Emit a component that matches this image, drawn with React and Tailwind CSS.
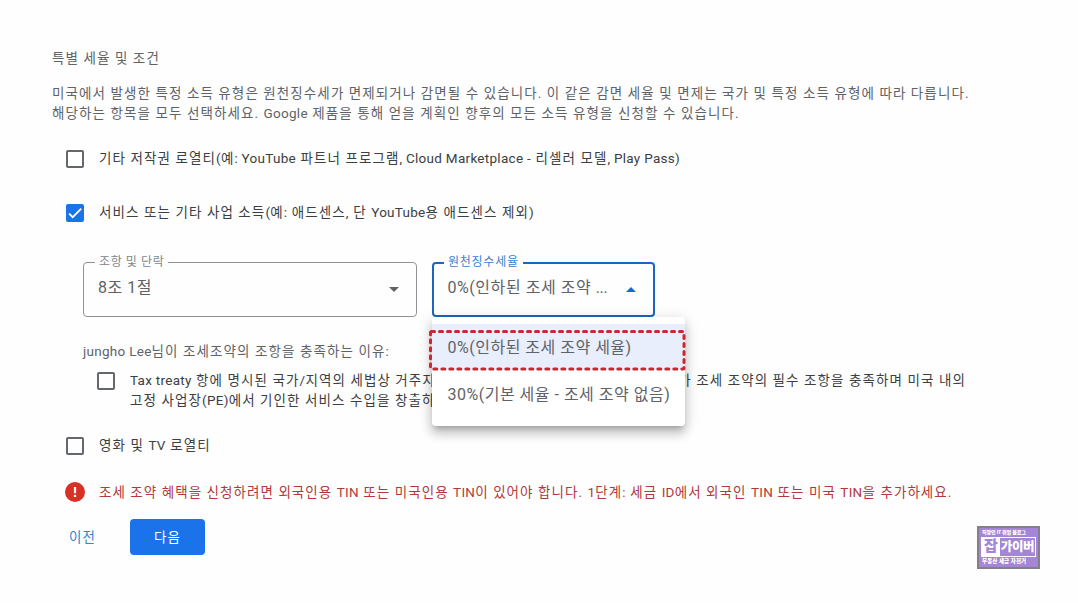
import clsx from "clsx";

// Latin runs are set tighter than the Korean text around them
function Mixed({ children }) {
  return children.split(/([A-Za-z0-9(),:/-]+(?: [A-Za-z0-9(),:/-]+)*)/).map((part, i) =>
    i % 2 ? (
      <span key={i} className="tracking-[0.28px]">{part}</span>
    ) : (
      part
    )
  );
}

function Checkbox({ checked }) {
  return (
    <span
      className={clsx(
        "flex h-[18px] w-[18px] shrink-0 items-center justify-center rounded-[2px]",
        checked ? "bg-[#1a73e8]" : "border-2 border-[#64676b]"
      )}
    >
      {checked && (
        <svg viewBox="0 0 24 24" className="h-[18px] w-[18px]" fill="none" stroke="white" strokeWidth="2.4">
          <path d="M4.1 12.7 9 17.6 20.3 6.3" />
        </svg>
      )}
    </span>
  );
}

function Option({ checked, className, children }) {
  return (
    <label className={clsx("flex h-5 items-center gap-[15px] pl-[14px] text-[#3c4043]", className)}>
      <Checkbox checked={checked} />
      <span className="pb-0.5"><Mixed>{children}</Mixed></span>
    </label>
  );
}

function Menu() {
  return (
    <ul className="absolute -left-[2px] top-[53px] z-10 h-[109px] w-[253px] rounded-[4px] bg-white py-[7px] tracking-[0.5px] text-[#5f6368] shadow-[0_5px_5px_-3px_rgba(0,0,0,0.2),0_8px_10px_1px_rgba(0,0,0,0.14),0_3px_14px_2px_rgba(0,0,0,0.12)]">
      <li className="flex h-[46px] items-center bg-[#e8eefc] pt-0.5 pl-[15.5px] whitespace-nowrap">0%(인하된 조세 조약 세율)</li>
      <li className="flex h-[48px] items-center pt-0.5 pl-[15.5px] whitespace-nowrap">30%(기본 세율 - 조세 조약 없음)</li>
      <svg className="absolute -left-1 top-[11px] h-[44px] w-[262px]" fill="none">
        <rect x="2.5" y="3.5" width="253.5" height="37.5" rx="1" stroke="#cf252d" strokeWidth="3" strokeLinecap="round" strokeDasharray="3 5" />
      </svg>
    </ul>
  );
}

function Logo() {
  return (
    <div className="flex h-[43px] w-[63px] flex-col border-2 border-[#858088] bg-[#a585d8] px-[2px] font-black text-white">
      <span className="pl-px text-[5px] leading-[9px] tracking-[-0.1px] whitespace-nowrap">직장인 IT 취업 블로그</span>
      <div className="flex h-[20px] border border-white tracking-normal">
        <span className="w-[18px] shrink-0 bg-white text-center text-[15px] leading-[17px] text-[#a585d8]">잡</span>
        <span className="flex-1 text-center text-[12.5px] leading-[18px] tracking-[-0.4px] whitespace-nowrap">가이버</span>
      </div>
      <span className="pl-px text-[5.5px] leading-[9px] tracking-[0.1px] whitespace-nowrap">부동산 세금 자전거</span>
    </div>
  );
}

export default function App() {
  return (
    <main className="relative h-[603px] w-[1078px] overflow-hidden bg-[#fefefe] pt-[48px] pl-[52px] font-[Roboto,'Noto_Sans_CJK_KR',sans-serif] text-[13.5px] leading-5 tracking-[1.09px] whitespace-nowrap text-[#5f6368]">
      <h1>특별 세율 및 조건</h1>
      <p className="mt-4 leading-[19.5px]">
        미국에서 발생한 특정 소득 유형은 원천징수세가 면제되거나 감면될 수 있습니다. 이 같은 감면 세율 및 면제는 국가 및 특정 소득 유형에 따라 다릅니다.
        <br />
        <Mixed>해당하는 항목을 모두 선택하세요. Google 제품을 통해 얻을 계획인 향후의 모든 소득 유형을 신청할 수 있습니다.</Mixed>
      </p>

      <Option className="mt-[26px]">기타 저작권 로열티(예: YouTube 파트너 프로그램, Cloud Marketplace - 리셀러 모델, Play Pass)</Option>
      <Option className="mt-[34px]" checked>서비스 또는 기타 사업 소득(예: 애드센스, 단 YouTube용 애드센스 제외)</Option>

      <div className="mt-[39px] ml-[31px] flex gap-[15px] text-[16px] tracking-[0.55px]">
        <fieldset className="h-[55px] w-[334px] rounded-[4px] border border-[#8f9398] pr-[17px] pl-[11px]">
          <legend className="px-[4px] text-[12px] leading-[0px] tracking-[0.6px] text-[#80868b]">
            <span className="relative -top-px">조항 및 단락</span>
          </legend>
          <div className="flex h-[50px] items-center justify-between pl-[3px]">
            <span>8조 1절</span>
            <span className="mt-[3px] border-x-[5px] border-t-[5px] border-x-transparent border-t-[#5f6368]" />
          </div>
        </fieldset>
        <fieldset className="relative h-[55px] w-[223px] rounded-[4px] border-2 border-[#1967c0] pr-[17px] pl-[10px]">
          <legend className="px-[4px] text-[12px] leading-[0px] tracking-[0.75px] text-[#3b82d0]">
            <span className="relative -top-px">원천징수세율</span>
          </legend>
          <div className="flex h-[48px] items-center justify-between pl-[3.5px]">
            <span>0%(인하된 조세 조약 <span className="tracking-[-0.4px]">...</span></span>
            <span className="mt-[3px] border-x-[5px] border-b-[5px] border-x-transparent border-b-[#1967d2]" />
          </div>
          <Menu />
        </fieldset>
      </div>

      <p className="mt-[24px] ml-[31px]"><Mixed>jungho Lee님이 조세조약의 조항을 충족하는 이유:</Mixed></p>
      <label className="mt-[10px] ml-[45px] flex gap-[15px] leading-[19.5px] text-[#3c4043]">
        <span className="mt-px"><Checkbox /></span>
        <span>
          <span className="flex w-[836px] justify-between">
            <span><Mixed>Tax treaty 항에 명시된 국가/지역의 세법상 거주자</Mixed></span>
            <span>가 조세 조약의 필수 조항을 충족하며 미국 내의</span>
          </span>
          <Mixed>고정 사업장(PE)에서 기인한 서비스 수입을 창출하</Mixed>
        </span>
      </label>

      <Option className="mt-[26px]">영화 및 TV 로열티</Option>

      <div className="mt-[26px] flex h-5 items-center gap-[14px] pl-[13px] text-[#b3383a]">
        <span className="flex h-5 w-5 items-center justify-center rounded-full bg-[#d93025]">
          <svg viewBox="0 0 20 20" className="h-5 w-5" fill="#fff">
            <rect x="8.9" y="5" width="2.2" height="6.2" />
            <rect x="8.9" y="12.8" width="2.2" height="2.2" />
          </svg>
        </span>
        <span className="tracking-[1.06px]">
          <Mixed>조세 조약 혜택을 신청하려면 외국인용 TIN 또는 미국인용 TIN이 있어야 합니다. 1단계: 세금 ID에서 외국인 TIN 또는 미국 TIN을 추가하세요.</Mixed>
        </span>
      </div>

      <div className="mt-[17px] flex h-[36px] items-center">
        <button className="w-[78px] pl-[17px] text-left text-[#3b82d0]">이전</button>
        <button className="h-[36px] w-[75px] rounded-[4px] bg-[#1a73e8] text-white">다음</button>
      </div>

      <div className="absolute top-[526px] left-[977px]"><Logo /></div>
    </main>
  );
}
